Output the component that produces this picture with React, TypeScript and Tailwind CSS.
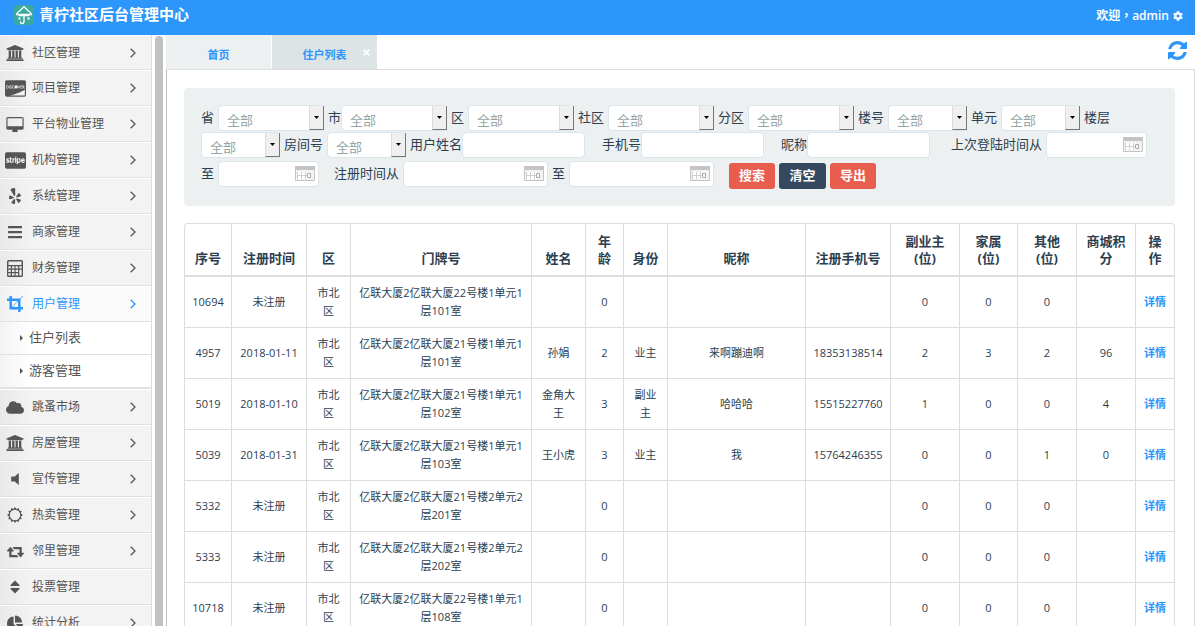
import type { ReactNode } from 'react'
import { FaBars, FaCcDiscover, FaCcStripe, FaChartPie, FaCloud, FaCog, FaYelp } from 'react-icons/fa'

function BankIcon() {
  return (
    <svg viewBox="0 0 1920 1792" className="h-4 w-[18px]" fill="currentColor">
      <path d="M960 0l960 384v128h-128q0 26-20.5 45t-48.5 19h-1526q-28 0-48.5-19t-20.5-45h-128v-128zm-704 640h256v768h128v-768h256v768h128v-768h256v768h128v-768h256v768h59q28 0 48.5 19t20.5 45v64h-1664v-64q0-26 20.5-45t48.5-19h59v-768zm1595 960q28 0 48.5 19t20.5 45v128h-1920v-128q0-26 20.5-45t48.5-19h1782z" />
    </svg>
  )
}

function DesktopIcon() {
  return (
    <svg viewBox="-64 0 1920 1664" className="h-[15px] w-[18px]" fill="currentColor">
      <path d="M1728 992v-832q0-13-9.5-22.5t-22.5-9.5h-1600q-13 0-22.5 9.5t-9.5 22.5v832q0 13 9.5 22.5t22.5 9.5h1600q13 0 22.5-9.5t9.5-22.5zm128-832v1088q0 66-47 113t-113 47h-544q0 37 16 77.5t32 71 16 43.5q0 26-19 45t-45 19h-512q-26 0-45-19t-19-45q0-14 16-44t32-70 16-78h-544q-66 0-113-47t-47-113v-1088q0-66 47-113t113-47h1600q66 0 113 47t47 113z" />
    </svg>
  )
}

function CalculatorIcon() {
  return (
    <svg viewBox="0 0 16 17" className="h-[17px] w-4" fill="currentColor">
      <path
        fillRule="evenodd"
        d="M1.5 0h13A1.5 1.5 0 0 1 16 1.5v14a1.5 1.5 0 0 1-1.5 1.5h-13A1.5 1.5 0 0 1 0 15.5v-14A1.5 1.5 0 0 1 1.5 0zM1.5 1.5v3.5h13V1.5zM1.3 6.3v2.2h2.5V6.3zM5 6.3v2.2h2.5V6.3zM8.6 6.3v2.2h2.5V6.3zM12.3 6.3v2.2h2.4V6.3zM1.3 9.8v2.2h2.5V9.8zM5 9.8v2.2h2.5V9.8zM8.6 9.8v2.2h2.5V9.8zM1.3 13.3v2.3h2.5v-2.3zM5 13.3v2.3h2.5v-2.3zM8.6 13.3v2.3h2.5v-2.3zM12.3 9.8v5.8h2.4V9.8z"
      />
    </svg>
  )
}

function CropIcon() {
  return (
    <svg viewBox="0 0 1664 1664" className="size-4" fill="currentColor">
      <path d="M557 1152h595v-595zm-45-45l595-595h-595v595zm1152 77v192q0 14-9 23t-23 9h-224v224q0 14-9 23t-23 9h-192q-14 0-23-9t-9-23v-224h-864q-14 0-23-9t-9-23v-864h-224q-14 0-23-9t-9-23v-192q0-14 9-23t23-9h224v-224q0-14 9-23t23-9h192q14 0 23 9t9 23v224h851l246-247q10-9 23-9t23 9q9 10 9 23t-9 23l-247 246v851h224q14 0 23 9t9 23z" />
    </svg>
  )
}

function VolumeIcon() {
  return (
    <svg viewBox="0 0 8 12" className="h-3 w-2" fill="currentColor">
      <path d="M7 .4q.8-.6.8.4v10.4q0 1-.8.4L3.8 8.5H.8q-.6 0-.6-.6V4.1q0-.6.6-.6h3z" />
    </svg>
  )
}

function SunIcon() {
  return (
    <svg viewBox="0 0 16 16" className="size-4" fill="currentColor">
      <path
        fillRule="evenodd"
        d="M8 0l1.5 2.1 2.3-1 .3 2.5 2.7.3-1.1 2.3L16 8l-2.3 1.7 1.1 2.4-2.7.3-.3 2.5-2.3-1L8 16l-1.5-2.1-2.3 1-.3-2.5-2.7-.3 1.1-2.4L0 8l2.3-1.8L1.2 3.9l2.7-.3.3-2.5 2.3 1zM8 2.8a5.2 5.2 0 1 0 0 10.400A5.2 5.2 0 0 0 8 2.8z"
      />
    </svg>
  )
}

function RetweetIcon() {
  return (
    <svg viewBox="0 128 1920 1536" className="h-[15px] w-[17px]" fill="currentColor">
      <path d="M1280 1504q0 13-9.5 22.5t-22.5 9.5h-960q-8 0-13.5-2t-9-7-5.5-8-3-11.5-1-11.5v-600h-192q-26 0-45-19t-19-45q0-24 15-41l320-384q19-22 49-22t49 22l320 384q15 17 15 41 0 26-19 45t-45 19h-192v384h576q16 0 25 11l160 192q7 11 7 21zm640-416q0 24-15 41l-320 384q-20 23-49 23t-49-23l-320-384q-15-17-15-41 0-26 19-45t45-19h192v-384h-576q-16 0-25-12l-160-192q-7-9-7-20 0-13 9.5-22.5t22.5-9.5h960q8 0 13.5 2t9 7 5.5 8 3 11.5 1 11.5v600h192q26 0 45 19t19 45z" />
    </svg>
  )
}

function SortIcon() {
  return (
    <svg viewBox="0 0 10 14" className="h-3.5 w-2.5" fill="currentColor">
      <path d="M5 .5l4.5 4.5q.3.9-.5.9H1q-.8 0-.5-.9zM5 13.5L.5 9Q.2 8.100 1 8.1h8q.8 0 .5.9z" />
    </svg>
  )
}

function RefreshIcon() {
  return (
    <svg viewBox="0 0 1536 1536" className="size-[19px]" fill="currentColor">
      <path d="M1511 928q0 5-1 7-64 268-268 434.5t-478 166.5q-146 0-282.5-55t-243.5-157l-129 129q-19 19-45 19t-45-19-19-45v-448q0-26 19-45t45-19h448q26 0 45 19t19 45-19 45l-137 137q71 66 161 102t187 36q134 0 250-65t186-179q11-17 53-117 8-23 30-23h192q13 0 22.5 9.5t9.5 22.5zm25-800v448q0 26-19 45t-45 19h-448q-26 0-45-19t-19-45 19-45l138-138q-148-137-349-137-134 0-250 65t-186 179q-11 17-53 117-8 23-30 23h-199q-13 0-22.5-9.5t-9.5-22.5v-7q65-268 270-434.5t480-166.5q146 0 284 55.5t245 156.5l130-129q19-19 45-19t45 19 19 45z" />
    </svg>
  )
}

function Logo() {
  return (
    <svg viewBox="0 0 20 20" className="size-5" fill="none">
      <rect width="20" height="20" rx="4" fill="#3aa9a0" />
      <path
        d="M2.5 9.5Q3 7.2 5.5 6L10 1.8 14.5 6q2.5 1.2 3 3.5zM5 10.5h10M10 10v6.5q0 2-2 2-1.5 0-1.5-1.5"
        stroke="#fff"
        strokeWidth="1.3"
        strokeLinecap="round"
        strokeLinejoin="round"
      />
      <path d="M4.5 12.5h2v2h-2zM13.5 12.5h2v2h-2z" fill="#fff" />
    </svg>
  )
}

function Chevron() {
  return (
    <svg viewBox="0 0 6 10" className="h-2.5 w-1.5" fill="none" stroke="currentColor" strokeWidth="1.3">
      <path d="M.7.7L5 5 .7 9.3" />
    </svg>
  )
}

interface MenuEntry {
  label: string
  icon: ReactNode
  leaf?: boolean
  children?: string[]
}

const menu: MenuEntry[] = [
  { label: '社区管理', icon: <BankIcon /> },
  { label: '项目管理', icon: <FaCcDiscover className="h-[19px] w-[21px]" /> },
  { label: '平台物业管理', icon: <DesktopIcon /> },
  { label: '机构管理', icon: <FaCcStripe className="h-[19px] w-[21px]" /> },
  { label: '系统管理', icon: <FaYelp className="h-4 w-3.5" /> },
  { label: '商家管理', icon: <FaBars className="size-4" /> },
  { label: '财务管理', icon: <CalculatorIcon /> },
  { label: '用户管理', icon: <CropIcon />, children: ['住户列表', '游客管理'] },
  { label: '跳蚤市场', icon: <FaCloud className="h-[17px] w-[18px]" /> },
  { label: '房屋管理', icon: <BankIcon /> },
  { label: '宣传管理', icon: <VolumeIcon /> },
  { label: '热卖管理', icon: <SunIcon /> },
  { label: '邻里管理', icon: <RetweetIcon /> },
  { label: '投票管理', icon: <SortIcon />, leaf: true },
  { label: '统计分析', icon: <FaChartPie className="size-4" /> },
]

function Sidebar() {
  return (
    <nav className="w-[152px] shrink-0 overflow-hidden border-r border-[#dcdcdc] bg-[#f3f3f3]" aria-label="主菜单">
      <ul>
        {menu.map((m) => (
          <li key={m.label} className="group">
            <a
              href="#"
              className={`flex h-9 items-center border-t border-b border-t-white border-b-[#e0e0e0] pr-[15px] text-xs group-first:h-[35px] ${
                m.children
                  ? 'bg-gradient-to-r from-[#f1f1f1] to-[#fafafa] to-20% text-[#2d96fb]'
                  : 'bg-gradient-to-r from-[#e9e9e9] to-[#f3f3f3] to-20% text-[#555]'
              }`}
            >
              <span className="flex w-8 items-center justify-center pr-0.5">{m.icon}</span>
              <span className="flex-1">{m.label}</span>
              {!m.leaf && <Chevron />}
            </a>
            {m.children && (
              <ul className="border-b border-[#e0e0e0] bg-gradient-to-r from-[#f3f3f3] to-white to-20%">
                {m.children.map((c) => (
                  <li key={c}>
                    <a
                      href="#"
                      className="flex h-[33px] items-center gap-1.5 border-b border-[#e0e0e0] pl-5 text-[13px] text-[#555]"
                    >
                      <svg viewBox="0 0 3 6" className="h-1.5 w-[3px]" fill="currentColor">
                        <path d="M0 0l3 3-3 3z" />
                      </svg>
                      {c}
                    </a>
                  </li>
                ))}
              </ul>
            )}
          </li>
        ))}
      </ul>
    </nav>
  )
}

function Group({ label, tight, children }: { label: string; tight?: boolean; children: ReactNode }) {
  return (
    <label className={`flex items-start ${tight ? '' : 'gap-1'}`}>
      <span className="leading-6 whitespace-nowrap">{label}</span>
      {children}
    </label>
  )
}

function Select({ short, label }: { short?: boolean; label?: string }) {
  return (
    <span className={`relative block ${short ? 'w-[79px]' : 'w-[106px]'}`}>
      <select
        aria-label={label}
        className="block h-[26px] w-full appearance-none rounded-sm border border-[#dce4ec] bg-white pt-1 pl-2 text-[13px] leading-5 text-[#95a5a6]"
      >
        <option>全部</option>
      </select>
      <span className="pointer-events-none absolute inset-y-px right-0 flex w-[15px] items-center justify-center border-r border-b border-l border-r-[#777] border-b-[#777] border-l-[#ddd] bg-[#efefef]">
        <svg viewBox="0 0 5 3" className="h-[3px] w-[5px]">
          <path d="M0 0h5L2.5 3z" />
        </svg>
      </span>
    </span>
  )
}

function TextInput() {
  return <input type="text" className="block h-[26px] w-[123px] rounded-sm border border-[#dce4ec] bg-white px-2 text-[13px]" />
}

function DateInput({ wide }: { wide?: boolean }) {
  return (
    <span className={`relative block ${wide ? 'w-[145px]' : 'w-[101px]'}`}>
      <input type="text" className="block h-[26px] w-full rounded-sm border border-[#dce4ec] bg-white pr-7 pl-2 text-[13px]" />
      <svg viewBox="0 0 20 15" className="pointer-events-none absolute top-[5px] right-1 h-[15px] w-5" fill="none">
        <path d="M.5.5h19v14H.5z" fill="#f3f3f3" stroke="#c4c4c4" />
        <path d="M0 0h20v4H0z" fill="#c4c4c4" />
        <path d="M2 6h11v7H2z" fill="#fff" />
        <path d="M2.5 6v7M6.5 6v7M10.5 6v7M2 9.5h10" stroke="#cfcfcf" />
        <path d="M12.5 7.5h3v4h-3z" fill="#fff" stroke="#aaa" />
      </svg>
    </span>
  )
}

function Filters() {
  return (
    <form className="rounded bg-[#ecf0f1] p-[17px] text-[13px]">
      <div className="flex gap-1">
        <Group label="省"><Select /></Group>
        <Group label="市" tight><Select /></Group>
        <Group label="区"><Select /></Group>
        <Group label="社区"><Select /></Group>
        <Group label="分区"><Select /></Group>
        <Group label="楼号"><Select short /></Group>
        <Group label="单元"><Select short /></Group>
        <span className="leading-6 whitespace-nowrap">楼层</span>
      </div>
      <div className="mt-px flex gap-[17px]">
        <div className="flex gap-1">
          <Select short label="楼层" />
          <Group label="房间号"><Select short /></Group>
          <Group label="用户姓名" tight><TextInput /></Group>
        </div>
        <Group label="手机号" tight><TextInput /></Group>
        <Group label="昵称" tight><TextInput /></Group>
        <div className="pl-1">
          <Group label="上次登陆时间从"><DateInput /></Group>
        </div>
      </div>
      <div className="mt-[3px] flex gap-[15px]">
        <Group label="至"><DateInput /></Group>
        <div className="flex gap-1">
          <Group label="注册时间从"><DateInput wide /></Group>
          <Group label="至"><DateInput wide /></Group>
        </div>
        <div className="flex gap-1 pt-0.5 font-bold text-white">
          <button type="submit" className="h-[26px] w-[46px] rounded-[3px] bg-[#e85d4d]">搜索</button>
          <button type="reset" className="h-[26px] w-[47px] rounded-[3px] bg-[#34495e]">清空</button>
          <button type="button" className="h-[26px] w-[46px] rounded-[3px] bg-[#e85d4d]">导出</button>
        </div>
      </div>
    </form>
  )
}

const columns = [
  { title: '序号', width: 'w-[47px]' },
  { title: '注册时间', width: 'w-[75px]' },
  { title: '区', width: 'w-[44px]' },
  { title: '门牌号', width: 'w-[181px]' },
  { title: '姓名', width: 'w-[54px]' },
  { title: '年龄', width: 'w-[38px]' },
  { title: '身份', width: 'w-[44px]' },
  { title: '昵称', width: 'w-[138px]' },
  { title: '注册手机号', width: 'w-[85px]' },
  { title: '副业主(位)', width: 'w-[69px]' },
  { title: '家属(位)', width: 'w-[58px]' },
  { title: '其他(位)', width: 'w-[59px]' },
  { title: '商城积分', width: 'w-[59px]' },
  { title: '操作', width: 'w-[39px]' },
]

const rows = [
  ['10694', '未注册', '市北区', '亿联大厦2亿联大厦22号楼1单元1层101室', '', '0', '', '', '', '0', '0', '0', ''],
  ['4957', '2018-01-11', '市北区', '亿联大厦2亿联大厦21号楼1单元1层101室', '孙娟', '2', '业主', '来啊蹦迪啊', '18353138514', '2', '3', '2', '96'],
  ['5019', '2018-01-10', '市北区', '亿联大厦2亿联大厦21号楼1单元1层102室', '金角大王', '3', '副业主', '哈哈哈', '15515227760', '1', '0', '0', '4'],
  ['5039', '2018-01-31', '市北区', '亿联大厦2亿联大厦21号楼1单元1层103室', '王小虎', '3', '业主', '我', '15764246355', '0', '0', '1', '0'],
  ['5332', '未注册', '市北区', '亿联大厦2亿联大厦21号楼2单元2层201室', '', '0', '', '', '', '0', '0', '0', ''],
  ['5333', '未注册', '市北区', '亿联大厦2亿联大厦21号楼2单元2层202室', '', '0', '', '', '', '0', '0', '0', ''],
  ['10718', '未注册', '市北区', '亿联大厦2亿联大厦22号楼1单元1层108室', '', '0', '', '', '', '0', '0', '0', ''],
]

function ResidentTable() {
  return (
    <table className="mt-[17px] w-full table-fixed border-separate border-spacing-0 rounded border-t border-l border-[#ddd] text-center">
      <thead>
        <tr>
          {columns.map((c) => (
            <th
              key={c.title}
              className={`h-[53px] border-r border-b-2 border-[#ddd] px-2 pb-2 align-bottom text-[13px] leading-[17px] font-bold last:rounded-tr ${c.width}`}
            >
              {c.title}
            </th>
          ))}
        </tr>
      </thead>
      <tbody>
        {rows.map((row) => (
          <tr key={row[0]}>
            {row.map((cell, i) => (
              <td key={i} className="h-[51px] border-r border-b border-[#ddd] px-[7px] text-[11px] leading-[18px]">
                {cell}
              </td>
            ))}
            <td className="border-r border-b border-[#ddd] text-[11px] font-bold text-[#2d96fb]">
              <a href="#">详情</a>
            </td>
          </tr>
        ))}
      </tbody>
    </table>
  )
}

export default function App() {
  return (
    <div className="flex h-screen flex-col overflow-hidden bg-white font-['Open_Sans','Noto_Sans_CJK_SC',sans-serif] text-[#2c3e50]">
      <header className="flex h-[35px] shrink-0 items-center justify-between bg-[#2d96fb] pr-3 pl-3.5 text-white">
        <h1 className="flex items-center gap-[5px] pb-1.5 text-[15px] font-bold">
          <Logo />
          青柠社区后台管理中心
        </h1>
        <button
          type="button"
          className="flex items-center gap-1 pb-1 font-['Open_Sans','Noto_Sans_CJK_TC',sans-serif] text-xs font-semibold"
        >
          欢迎，admin <FaCog className="size-2.5" />
        </button>
      </header>

      <div className="flex min-h-0 flex-1">
        <Sidebar />
        {/* Sidebar scroll thumb */}
        <div className="mt-px ml-[3px] w-2 shrink-0 rounded-t bg-[#c1c1c1]" />

        <main className="ml-[3px] flex min-w-0 flex-1 flex-col">
          <div className="flex h-[35px] shrink-0 items-start justify-between border-b border-[#ddd]">
            <div className="flex h-full gap-px text-[11px] font-bold text-[#2d96fb]">
              <a href="#" className="flex w-[105px] items-center justify-center bg-[#ecf0f1] pt-1.5">首页</a>
              <div className="relative flex w-[105px] bg-[#dce4e6]">
                <a href="#" className="flex flex-1 items-center justify-center pt-1.5">住户列表</a>
                <button type="button" aria-label="关闭" className="absolute top-3.5 right-[7px] text-white">
                  <svg viewBox="0 0 7 7" className="size-[7px]" stroke="currentColor" strokeWidth="1.8">
                    <path d="M.7.7l5.6 5.6M6.3.7L.7 6.3" />
                  </svg>
                </button>
              </div>
            </div>
            <button type="button" aria-label="刷新" className="mt-1.5 mr-2 text-[#2d96fb]">
              <RefreshIcon />
            </button>
          </div>
          <div className="min-h-0 flex-1 overflow-hidden border-r border-l border-r-[#ddd] border-l-[#bbb] pt-[18px] pr-[19px] pl-[17px]">
            <Filters />
            <ResidentTable />
          </div>
        </main>
      </div>
    </div>
  )
}
